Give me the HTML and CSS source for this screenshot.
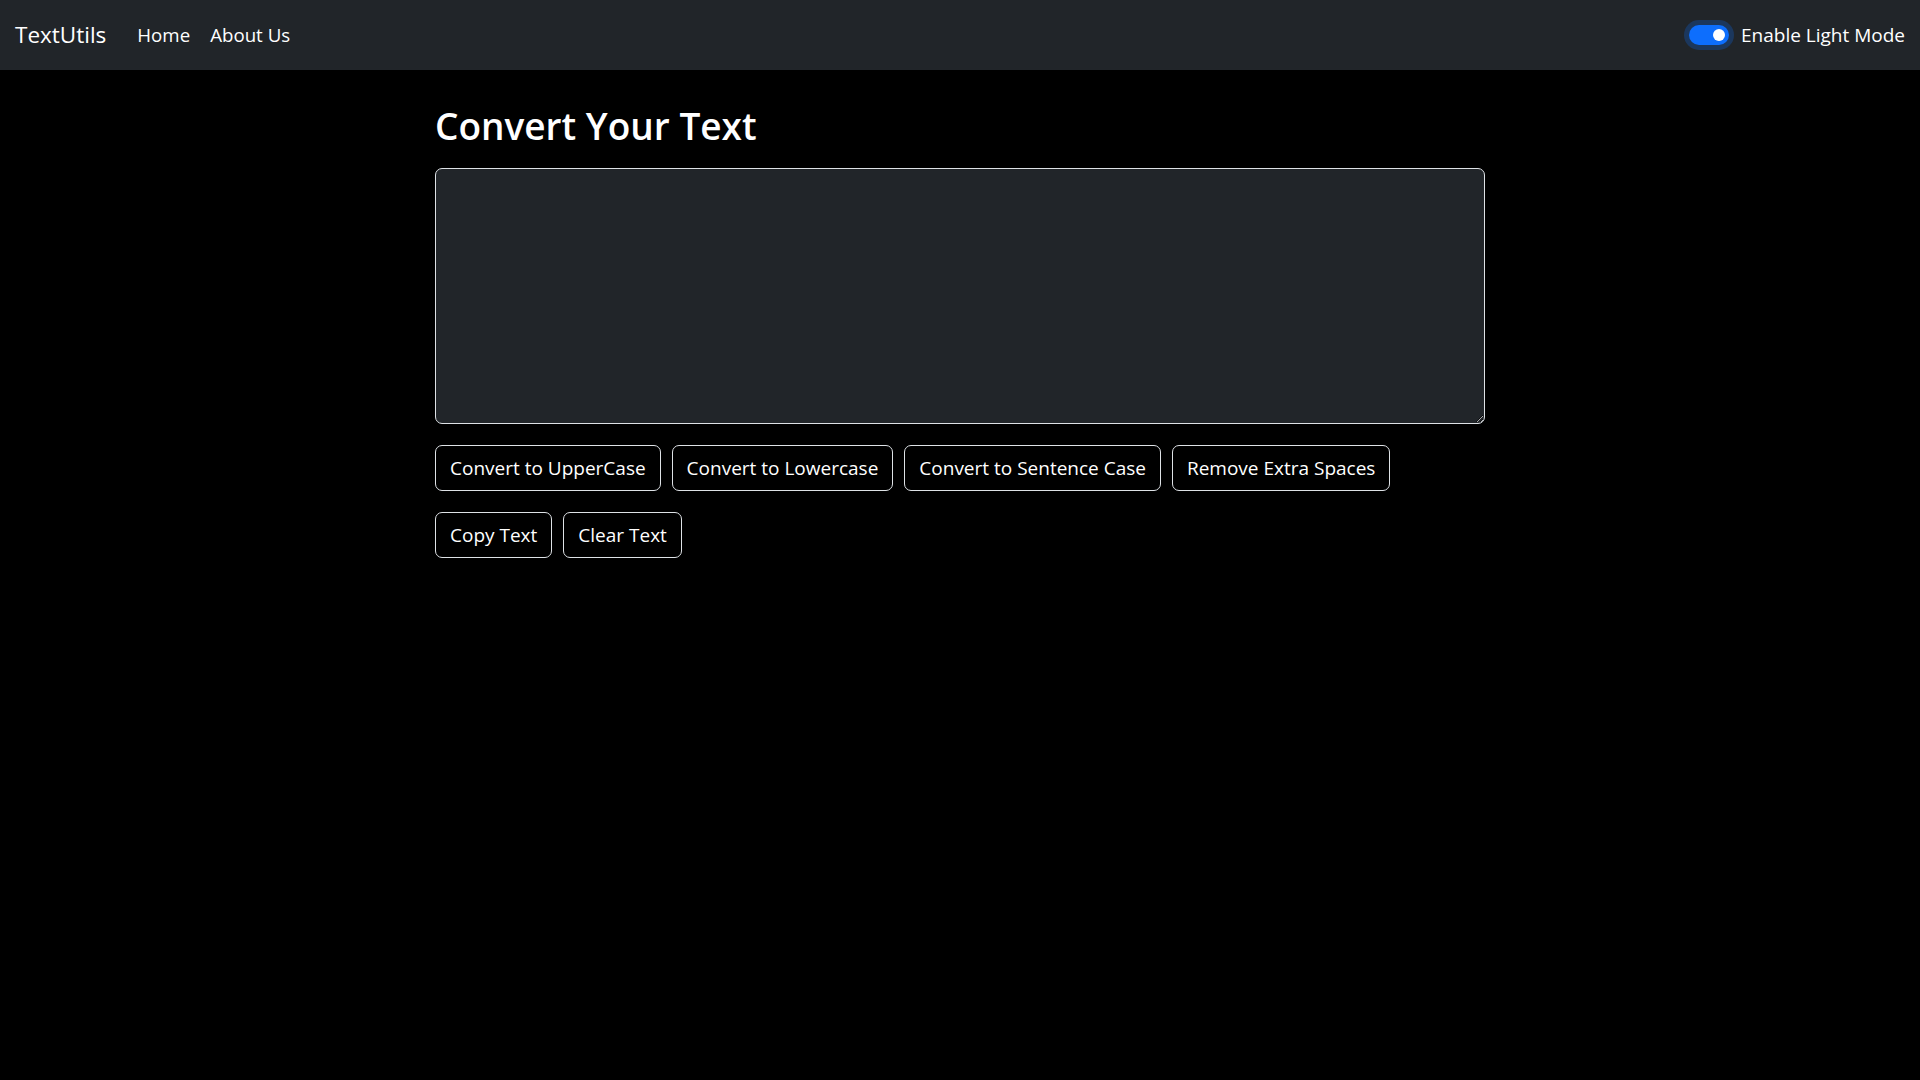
FILE: index.html
```html
<!DOCTYPE html>
<html lang="en">
<head>
<meta charset="utf-8">
<title>TextUtils</title>
<link rel="stylesheet" href="styles.css">
</head>
<body>
<nav class="navbar">
  <div class="nav-left">
    <a class="brand" href="#">TextUtils</a>
    <ul class="nav-links">
      <li><a href="#">Home</a></li>
      <li><a href="#">About Us</a></li>
    </ul>
  </div>
  <label class="switch">
    <input type="checkbox" class="switch-input" checked>
    <span class="switch-track"><span class="switch-knob"></span></span>
    <span class="switch-label">Enable Light Mode</span>
  </label>
</nav>
<main class="container">
  <h2 class="title">Convert Your Text</h2>
  <textarea class="text-box" rows="8"></textarea>
  <div class="btn-row">
    <button class="btn">Convert to UpperCase</button>
    <button class="btn">Convert to Lowercase</button>
    <button class="btn">Convert to Sentence Case</button>
    <button class="btn">Remove Extra Spaces</button>
  </div>
  <div class="btn-row">
    <button class="btn">Copy Text</button>
    <button class="btn">Clear Text</button>
  </div>
</main>
</body>
</html>
```
FILE: styles.css
```css
* { box-sizing: border-box; }
html, body {
  margin: 0;
  padding: 0;
  background: #000;
  color: #fff;
  font-family: "Open Sans", "Noto Sans", sans-serif;
  font-size: 20px;
  line-height: 30px;
  min-height: 1080px;
}
.navbar {
  height: 70px;
  background: #212529;
  display: flex;
  align-items: center;
  justify-content: space-between;
  padding: 0 15px;
}
.nav-left {
  display: flex;
  align-items: center;
}
.brand {
  color: #fff;
  text-decoration: none;
  font-size: 22.5px;
  margin-right: 21px;
}
.nav-links {
  list-style: none;
  margin: 0;
  padding: 0;
  display: flex;
}
.nav-links a {
  color: #fff;
  text-decoration: none;
  font-size: 18.7px;
  padding: 0 10px;
  display: block;
}
.switch {
  display: flex;
  align-items: center;
  gap: 12px;
}
.switch-input { display: none; }
.switch-track {
  width: 40px;
  height: 20px;
  border-radius: 10px;
  background: #0d6efd;
  box-shadow: 0 0 0 5px rgba(13, 110, 253, 0.25);
  display: flex;
  align-items: center;
  justify-content: flex-end;
  padding: 0 4px;
}
.switch-knob {
  width: 12px;
  height: 12px;
  border-radius: 50%;
  background: #fff;
}
.switch-label {
  font-size: 19px;
}
.container {
  width: 1050px;
  margin: 0 0 0 435px;
  padding-top: 32px;
}
.title {
  font-size: 37px;
  font-weight: 600;
  line-height: 48px;
  margin: 0 0 18px 0;
}
.text-box {
  display: block;
  width: 1050px;
  height: 256px;
  background: #212529;
  border: 1px solid #dee2e6;
  border-radius: 7px;
  color: #fff;
  font: inherit;
  padding: 7px 15px;
  margin: 0 0 21px 0;
}
.btn-row {
  display: flex;
  gap: 11px;
  margin-bottom: 21px;
}
.btn {
  height: 46px;
  background: #000;
  color: #fff;
  border: 1px solid #dee2e6;
  border-radius: 7px;
  font-family: inherit;
  font-size: 19px;
  padding: 0 14px;
}
```
